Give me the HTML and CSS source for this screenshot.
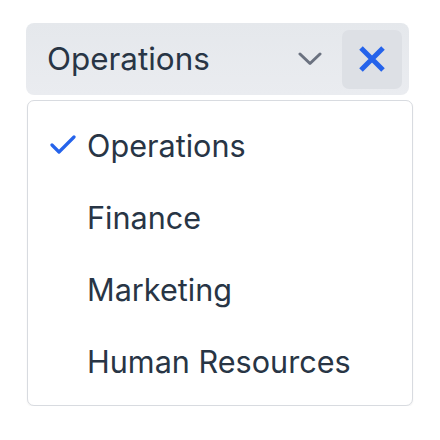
FILE: index.html
```html
<!DOCTYPE html>
<html lang="en">
  <head>
    <meta charset="UTF-8" />
    <meta name="viewport" content="width=device-width, initial-scale=1.0" />
    <title>Department Select</title>
    <link rel="stylesheet" href="styles.css">
  </head>
  <body>
    <div class="wrapper">
      <div class="select">
        <span class="select-value">Operations</span>
        <svg class="chevron" width="24" height="14" viewBox="0 0 24 14">
          <path d="M2 2 L12 11.5 L22 2" fill="none" stroke="#6b7280" stroke-width="3" stroke-linecap="round" stroke-linejoin="round" />
        </svg>
        <button class="clear" aria-label="Clear">
          <svg width="28" height="28" viewBox="0 0 28 28">
            <path d="M3 3 L25 25 M25 3 L3 25" fill="none" stroke="#2563eb" stroke-width="5" />
          </svg>
        </button>
      </div>
      <ul class="options">
        <li class="option selected">
          <span class="check">
            <svg width="26" height="20" viewBox="0 0 26 20">
              <path d="M2 10 L9 17 L24 2" fill="none" stroke="#2563eb" stroke-width="3.2" stroke-linecap="round" stroke-linejoin="round" />
            </svg>
          </span>
          Operations
        </li>
        <li class="option"><span class="check"></span>Finance</li>
        <li class="option"><span class="check"></span>Marketing</li>
        <li class="option"><span class="check"></span>Human Resources</li>
      </ul>
    </div>
  </body>
</html>
```

FILE: styles.css
```css
* {
  margin: 0;
  padding: 0;
  box-sizing: border-box;
}
body {
  background-color: #ffffff;
  font-family: Inter, "Noto Sans", sans-serif;
  color: #283545;
}
.wrapper {
  display: flex;
  flex-direction: column;
  padding: 23px 0 0 26px;
}
.select {
  display: flex;
  align-items: center;
  width: 383px;
  height: 72px;
  padding: 0 7px 0 21px;
  border-radius: 8px;
  background: linear-gradient(#e5e8ec, #eaecf0);
}
.select-value {
  flex: 1;
  font-size: 31.4px;
}
.chevron {
  margin-right: 20px;
}
.clear {
  display: flex;
  align-items: center;
  justify-content: center;
  width: 60px;
  height: 59px;
  border: none;
  border-radius: 7px;
  background-color: #dde0e5;
  cursor: pointer;
}
.options {
  list-style: none;
  width: 386px;
  margin: 5px 0 0 1px;
  padding: 8px 0;
  border: 1px solid #d8dbe0;
  border-radius: 7px;
  background-color: #ffffff;
  box-shadow: 0 1px 2px rgba(0, 0, 0, 0.06);
}
.option {
  display: flex;
  align-items: center;
  height: 72px;
  padding-left: 22px;
  font-size: 30.6px;
}
.check {
  display: flex;
  width: 37px;
}
```
